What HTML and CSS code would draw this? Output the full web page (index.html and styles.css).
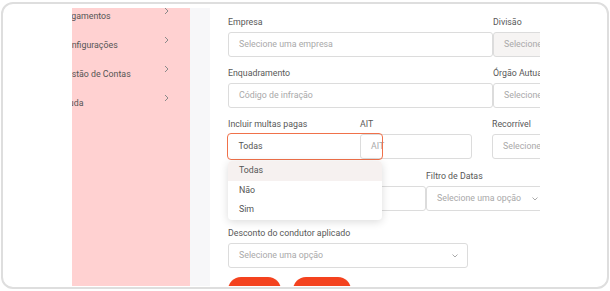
FILE: index.html
```html
<!DOCTYPE html>
<html lang="pt-BR">
<head>
  <meta charset="UTF-8">
  <meta name="viewport" content="width=device-width, initial-scale=1.0">
  <title>Multas | Filtros</title>
  <link rel="stylesheet" href="styles.css">
</head>
<body>
  <div class="frame">
    <div class="shot">
      <!-- Menu lateral -->
      <aside class="sidebar">
        <ul class="menu">
          <li><span>Pagamentos</span><svg class="chev" width="5" height="8" viewBox="0 0 5 8"><path d="M1 1l3 3-3 3" fill="none" stroke="#8a8a8a" stroke-width="1"/></svg></li>
          <li><span>Configurações</span><svg class="chev" width="5" height="8" viewBox="0 0 5 8"><path d="M1 1l3 3-3 3" fill="none" stroke="#8a8a8a" stroke-width="1"/></svg></li>
          <li><span>Gestão de Contas</span><svg class="chev" width="5" height="8" viewBox="0 0 5 8"><path d="M1 1l3 3-3 3" fill="none" stroke="#8a8a8a" stroke-width="1"/></svg></li>
          <li><span>Ajuda</span><svg class="chev" width="5" height="8" viewBox="0 0 5 8"><path d="M1 1l3 3-3 3" fill="none" stroke="#8a8a8a" stroke-width="1"/></svg></li>
        </ul>
      </aside>

      <div class="content">
        <main class="card">
          <div class="row">
            <div class="field w265">
              <label>Empresa</label>
              <div class="input ph">Selecione uma empresa</div>
            </div>
            <div class="field w200">
              <label>Divisão</label>
              <div class="input ph disabled">Selecione uma divisão</div>
            </div>
          </div>

          <div class="row">
            <div class="field w265">
              <label>Enquadramento</label>
              <div class="input ph">Código de infração</div>
            </div>
            <div class="field w200">
              <label>Órgão Autuador</label>
              <div class="input ph">Selecione um órgão</div>
            </div>
          </div>

          <div class="row">
            <div class="field w132 open">
              <label>Incluir multas pagas</label>
              <div class="input select focused">Todas</div>
              <!-- Lista aberta do select -->
              <ul class="dropdown">
                <li class="active">Todas</li>
                <li>Não</li>
                <li>Sim</li>
              </ul>
            </div>
            <div class="field w112">
              <label>AIT</label>
              <div class="input ph see">AIT</div>
            </div>
            <div class="field w200 ml20">
              <label>Recorrível</label>
              <div class="input ph">Selecione uma opção</div>
            </div>
          </div>

          <div class="row row-wide">
            <div class="field w198">
              <label>Placa</label>
              <div class="input ph">Placa do veículo</div>
            </div>
            <div class="field w122">
              <label>Filtro de Datas</label>
              <div class="input ph select">Selecione uma opção
                <svg class="caret" width="6" height="4" viewBox="0 0 6 4"><path d="M0.5 0.5l2.5 2.5 2.5-2.5" fill="none" stroke="#a0a0a0" stroke-width="0.9"/></svg>
              </div>
            </div>
          </div>

          <div class="row">
            <div class="field w240">
              <label>Desconto do condutor aplicado</label>
              <div class="input ph select">Selecione uma opção
                <svg class="caret" width="6" height="4" viewBox="0 0 6 4"><path d="M0.5 0.5l2.5 2.5 2.5-2.5" fill="none" stroke="#a0a0a0" stroke-width="0.9"/></svg>
              </div>
            </div>
          </div>

          <div class="actions">
            <button class="btn">Filtrar</button>
            <button class="btn wide">Limpar</button>
          </div>
        </main>
      </div>
    </div>
  </div>
</body>
</html>
```

FILE: styles.css
```css
body {
  margin: 0;
  background: white;
  font-family: Roboto, "Liberation Sans", sans-serif;
  font-size: 8.8px;
  color: #555;
}
.frame {
  box-sizing: border-box;
  width: 608px;
  height: 287px;
  margin: 2px 0 0 1px;
  padding: 4px 0 0 69px;
  border: 2px solid #dedede;
  border-radius: 12px;
  background: white;
}
.shot {
  display: flex;
  width: 468px;
  height: 278px;
  overflow: hidden;
}
.sidebar {
  flex: 0 0 118px;
  background: #ffd1d1;
}
.menu {
  list-style: none;
  margin: 0;
  padding: 0;
}
.menu li {
  display: flex;
  justify-content: space-between;
  align-items: flex-start;
  height: 29px;
  padding: 1px 21px 0 0;
  box-sizing: border-box;
  line-height: 14px;
  color: #555;
  white-space: nowrap;
}
.menu li span {
  margin-left: -11px;
}
.chev {
  margin-top: -2px;
}
.content {
  flex: 1;
  display: flex;
  min-width: 0;
  background: #f7f7f9;
  padding-left: 20px;
}
.card {
  flex: 1;
  min-width: 0;
  background: white;
  padding: 7px 0 0 18px;
}
.row {
  display: flex;
  margin-bottom: 9px;
}
.row-wide {
  margin-bottom: 15px;
}
.field {
  position: relative;
  flex: 0 0 auto;
}
.field label {
  display: block;
  line-height: 14px;
  margin-bottom: 3px;
  color: #585858;
  white-space: nowrap;
}
.w265 { width: 265px; }
.w200 { width: 200px; }
.w132 { width: 132px; }
.w112 { width: 112px; }
.w198 { width: 198px; }
.w122 { width: 122px; }
.w240 { width: 240px; }
.ml20 { margin-left: 20px; }
.input {
  position: relative;
  box-sizing: border-box;
  height: 25px;
  padding: 0 10px;
  border: 1px solid #dcdcdc;
  border-radius: 3px;
  line-height: 23px;
  white-space: nowrap;
  overflow: hidden;
  color: #555;
}
.ph {
  color: #a9a9a9;
}
.disabled {
  background: #f6f4f3;
}
.see {
  background: transparent;
}
.select {
  padding-right: 22px;
}
.caret {
  position: absolute;
  right: 9px;
  top: 10px;
}
.focused {
  z-index: 1;
  width: 156px;
  height: 27px;
  margin: -1px 0 0 -1px;
  border: 1.5px solid #f0714a;
  border-radius: 4px;
  background: transparent;
  line-height: 24px;
  padding-left: 10.5px;
}
.dropdown {
  position: absolute;
  z-index: 2;
  top: 44px;
  left: 0;
  width: 154px;
  margin: 0;
  padding: 0;
  list-style: none;
  background: white;
  border-radius: 4px;
  box-shadow: 0 2px 8px rgba(0, 0, 0, 0.14);
  overflow: hidden;
}
.dropdown li {
  height: 19.5px;
  line-height: 19.5px;
  padding-left: 11px;
  color: #555;
}
.dropdown li.active {
  background: #f6f1f0;
}
.actions {
  display: flex;
  gap: 12px;
}
.btn {
  width: 53px;
  height: 26px;
  border: none;
  border-radius: 13px;
  background: #f4421e;
  color: white;
  font-family: inherit;
  font-size: 9px;
}
.btn.wide {
  width: 58px;
}
```
